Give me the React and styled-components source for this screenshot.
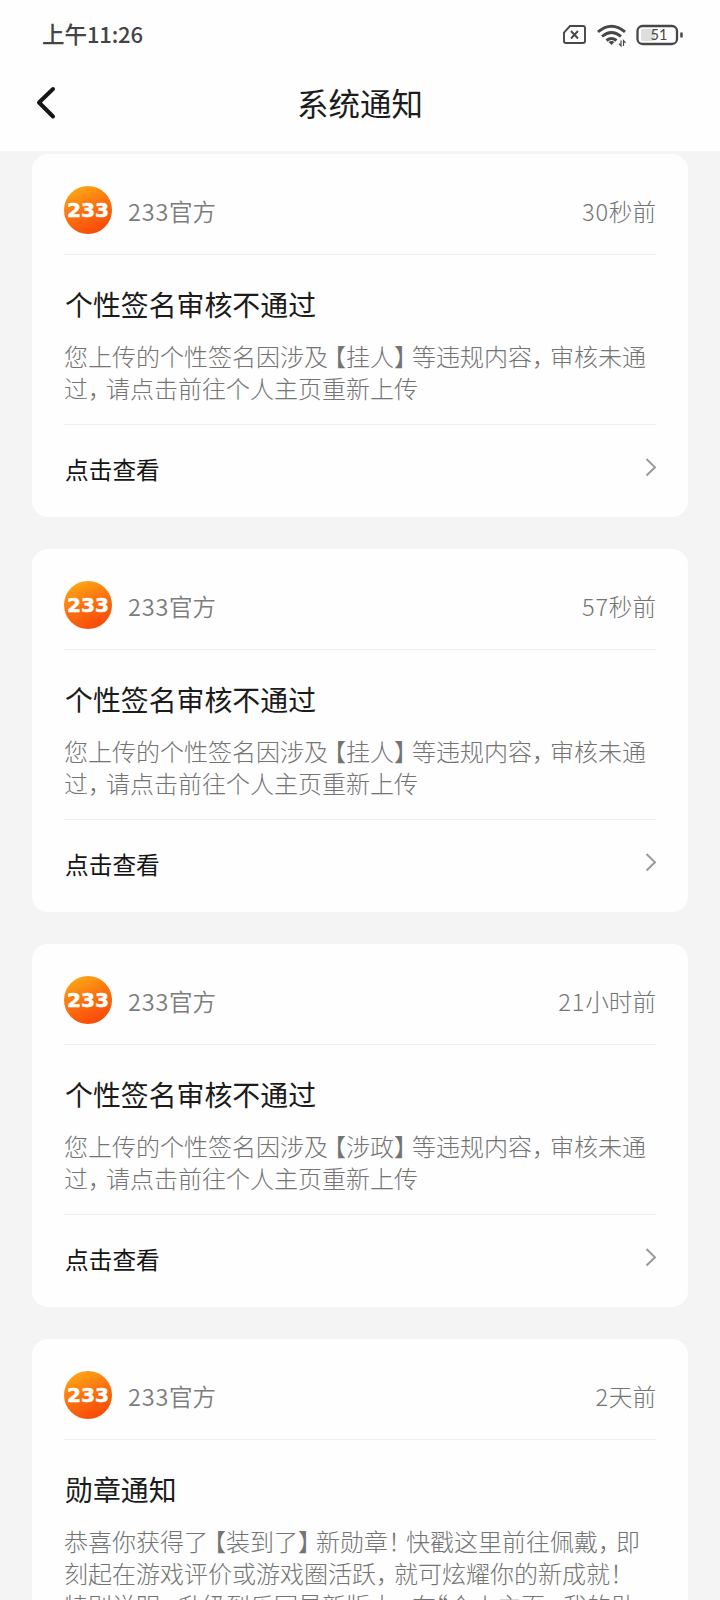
import React from "react";
import styled, { createGlobalStyle } from "styled-components";

const notices = [
  {
    time: ["30", "秒前"],
    title: "个性签名审核不通过",
    lines: ["您上传的个性签名因涉及【挂人】等违规内容，审核未通", "过，请点击前往个人主页重新上传"],
  },
  {
    time: ["57", "秒前"],
    title: "个性签名审核不通过",
    lines: ["您上传的个性签名因涉及【挂人】等违规内容，审核未通", "过，请点击前往个人主页重新上传"],
  },
  {
    time: ["21", "小时前"],
    title: "个性签名审核不通过",
    lines: ["您上传的个性签名因涉及【涉政】等违规内容，审核未通", "过，请点击前往个人主页重新上传"],
  },
  {
    time: ["2", "天前"],
    title: "勋章通知",
    lines: [
      "恭喜你获得了【装到了】新勋章！快戳这里前往佩戴，即",
      "刻起在游戏评价或游戏圈活跃，就可炫耀你的新成就！",
      "特别说明：升级到乐园最新版本，在“个人主页-我的勋",
    ],
  },
];

// full width punctuation is set narrower than the characters around it
const Line = ({ text }) => (
  <TextLine>
    {text.split(/([【】，！：“-])/).map((part, i) => {
      if (part === "【") return <OpenMark key={i}>{part}</OpenMark>;
      if (part === "“") return <Quote key={i}>{part}</Quote>;
      if (/^[】，！：-]$/.test(part)) return <Mark key={i}>{part}</Mark>;
      return part;
    })}
  </TextLine>
);

const StatusIcons = () => (
  <svg width="122" height="28" viewBox="0 0 122 28" fill="none" stroke="#474747">
    <path d="M8 5H21a2 2 0 0 1 2 2v13a2 2 0 0 1-2 2H4a2 2 0 0 1-2-2V11.500Z" strokeWidth="1.9" />
    <path d="M9 10l7 7.500M16 10l-7 7.500" strokeWidth="1.9" />
    <g strokeWidth="2.900">
      <path d="M36 10.800Q49.500 -0.500 63 10.800" />
      <path d="M40 15.500Q49.500 7.500 59 15.500" />
      <path d="M44.500 19.500Q49.500 15.500 54.500 19.500" />
    </g>
    <path d="M46.500 21Q49.500 18.800 52.500 21L49.500 24Z" fill="#474747" stroke="none" />
    <path d="M59 19.500v5.500l-2-2.300M61.500 25v-5.500l2 2.300" strokeWidth="1.200" />
    <rect x="75.500" y="5" width="39.500" height="18" rx="5" strokeWidth="2.300" />
    <rect x="79" y="8" width="14" height="12" rx="2" fill="#dedede" stroke="none" />
    <path d="M119.500 11.500v5" strokeWidth="2.500" />
    <text x="97" y="19.300" textAnchor="middle" fill="#474747" stroke="none" fontSize="14.500" fontFamily="Lato, sans-serif">51</text>
  </svg>
);

const Avatar = () => (
  <svg width="48" height="48" viewBox="0 0 48 48">
    <defs>
      <linearGradient id="sun" x1="0.15" y1="0" x2="0.600" y2="1">
        <stop offset="0" stopColor="#fdae14" />
        <stop offset="0.500" stopColor="#fc7411" />
        <stop offset="1" stopColor="#f84a08" />
      </linearGradient>
    </defs>
    <circle cx="24" cy="24" r="24" fill="url(#sun)" />
    <AvatarText x="3" y="31" textLength="42" lengthAdjust="spacingAndGlyphs">233</AvatarText>
  </svg>
);

const App = () => (
  <>
    <GlobalStyle />
    <Screen>
      <StatusBar>
        <Clock>上午<span>11:26</span></Clock>
        <StatusIcons />
      </StatusBar>
      <Header>
        <Back>
          <svg width="20" height="34" viewBox="0 0 20 34" fill="none" stroke="#151515" strokeWidth="4" strokeLinecap="round" strokeLinejoin="round">
            <path d="M17 3L3 16.500L17 30.500" />
          </svg>
        </Back>
        <h1>系统通知</h1>
      </Header>
      <List>
        {notices.map((notice, i) => (
          <Card key={i}>
            <CardHead>
              <Avatar />
              <Sender><Digits>233</Digits>官方</Sender>
              <Time><Digits>{notice.time[0]}</Digits>{notice.time[1]}</Time>
            </CardHead>
            <Content>
              <Title>{notice.title}</Title>
              {notice.lines.map((line) => <Line key={line} text={line} />)}
            </Content>
            <More>
              点击查看
              <svg width="12" height="20" viewBox="0 0 12 20" fill="none" stroke="#999" strokeWidth="2">
                <path d="M2.500 1L11 9.300L2.500 17.500" />
              </svg>
            </More>
          </Card>
        ))}
      </List>
    </Screen>
  </>
);

export default App;

const GlobalStyle = createGlobalStyle`
  * {
    box-sizing: border-box;
  }
  body {
    margin: 0;
    background: #f5f4f5;
    font-family: "Noto Sans CJK SC", sans-serif;
  }
`;

const Screen = styled.div`
  width: 720px;
  height: 1600px;
  overflow: hidden;
  display: flex;
  flex-direction: column;
`;

const StatusBar = styled.div`
  flex: none;
  height: 70px;
  padding: 0 36px 0 42px;
  display: flex;
  align-items: center;
  justify-content: space-between;
  background: #fefefe;
`;

const Clock = styled.div`
  padding-bottom: 4px;
  font-size: 22.500px;
  font-weight: 500;
  line-height: 30px;
  color: #444;
  span {
    font-size: 22px;
    letter-spacing: -0.2px;
  }
`;

const Header = styled.header`
  flex: none;
  height: 81px;
  padding: 0 36px;
  display: grid;
  grid-template-columns: 20px 1fr 20px;
  background: #fefefe;
  h1 {
    margin: 12px 0 0;
    font-size: 31.500px;
    font-weight: 400;
    line-height: 40px;
    text-align: center;
    color: #1c1c1c;
  }
`;

const Back = styled.div`
  padding-top: 16px;
`;

const AvatarText = styled.text`
  fill: #fff;
  stroke: #fff;
  stroke-width: 0.5px;
  font-family: "DejaVu Sans", sans-serif;
  font-size: 19.5px;
  font-weight: 700;
`;

const List = styled.main`
  flex: none;
  padding: 3px 32px 0;
  display: flex;
  flex-direction: column;
  gap: 32px;
`;

const Card = styled.section`
  padding: 0 32px;
  border-radius: 16px;
  background: #fefefe;
`;

const CardHead = styled.div`
  height: 101px;
  padding-top: 11px;
  display: flex;
  align-items: center;
  border-bottom: 1px solid #eee;
`;

const Sender = styled.div`
  margin: 2px 0 0 16px;
  font-size: 23.500px;
  line-height: 32px;
  font-weight: 350;
  color: #7c7c7c;
`;

const Digits = styled.span`
  letter-spacing: 0.8px;
`;

const Time = styled.div`
  margin: 2px 0 0 auto;
  font-size: 23.600px;
  line-height: 32px;
  font-weight: 300;
  color: #747474;
`;

const Content = styled.div`
  padding: 30px 0 20px;
  border-bottom: 1px solid #eee;
`;

const Title = styled.h2`
  margin: 0 0 16px;
  padding-left: 1px;
  font-size: 27.900px;
  line-height: 39px;
  font-weight: 400;
  color: #1c1c1c;
`;

const TextLine = styled.div`
  height: 32px;
  font-size: 24px;
  line-height: 32px;
  font-weight: 300;
  white-space: nowrap;
  color: #747474;
`;

const Mark = styled.span`
  display: inline-block;
  width: 18px;
  font-feature-settings: "halt" 1;
`;

const OpenMark = styled(Mark)`
  padding-left: 6px;
`;

const Quote = styled(Mark)`
  width: 13px;
`;

const More = styled.div`
  height: 92px;
  padding: 0 0 5px 1px;
  display: flex;
  align-items: center;
  justify-content: space-between;
  font-size: 23.700px;
  color: #151515;
  svg {
    margin-bottom: 1px;
  }
`;
